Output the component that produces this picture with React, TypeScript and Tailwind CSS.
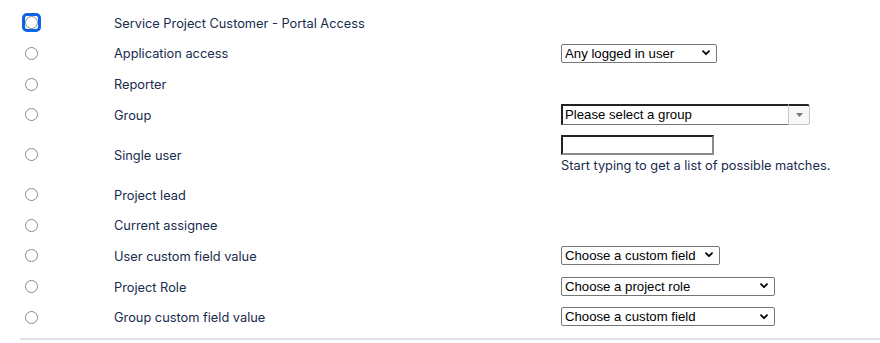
import React from 'react';

const Chevron = () => (
  <svg width="8" height="6" viewBox="0 0 8 6" className="absolute right-[7px] top-1/2 -translate-y-1/2 pointer-events-none">
    <path d="M1 1.2l3 3 3-3" fill="none" stroke="#000" strokeWidth="1.8" strokeLinecap="round" strokeLinejoin="round" />
  </svg>
);

const NativeSelect: React.FC<{ label: string; width: string }> = ({ label, width }) => (
  <div className={`relative h-[19px] ${width}`}>
    <div className="h-full w-full border border-[#767676] rounded-[2px] bg-white pl-[3px] text-[13.2px] leading-[17px] text-black font-['Liberation_Sans',Arial,sans-serif] whitespace-nowrap">
      {label}
    </div>
    <Chevron />
  </div>
);

const Radio: React.FC<{ focused?: boolean }> = ({ focused }) => (
  <span
    className={`flex items-center justify-center w-[19px] h-[19px] rounded-[5px] ${
      focused ? 'border-[3px] border-[#0b63e5]' : 'border-[3px] border-transparent'
    }`}
  >
    <span className="block w-[13px] h-[13px] shrink-0 rounded-full border border-[#8a8a8a] bg-white" />
  </span>
);

interface Row {
  label: string;
  control?: React.ReactNode;
  tall?: boolean;
}

const rows: Row[] = [
  { label: 'Service Project Customer - Portal Access' },
  { label: 'Application access', control: <NativeSelect label="Any logged in user" width="w-[156px]" /> },
  { label: 'Reporter' },
  {
    label: 'Group',
    control: (
      <div className="flex h-[21px] w-[249px]">
        <div className="flex-1 border-t-2 border-l-2 border-b border-[#222] border-b-[#767676] bg-white pl-[2px] text-[13.2px] leading-[17px] text-black font-['Liberation_Sans',Arial,sans-serif]">
          Please select a group
        </div>
        <div className="flex w-[22px] items-center justify-center border border-[#c6c6c6] rounded-r-[3px] bg-[#f7f7f7] border-t-[#222] border-t-2">
          <svg width="7" height="4" viewBox="0 0 7 4">
            <path d="M0 0h7L3.5 4z" fill="#777" />
          </svg>
        </div>
      </div>
    ),
  },
  {
    label: 'Single user',
    tall: true,
    control: (
      <div className="flex flex-col">
        <div className="h-[20px] w-[153px] border-t-2 border-l-2 border-[#222] border-r-2 border-b-2 border-r-[#8a8a8a] border-b-[#8a8a8a] bg-white" />
        <div className="mt-[3px] text-[12.8px] leading-[16px] text-[#172b4d]">Start typing to get a list of possible matches.</div>
      </div>
    ),
  },
  { label: 'Project lead' },
  { label: 'Current assignee' },
  { label: 'User custom field value', control: <NativeSelect label="Choose a custom field" width="w-[159px]" /> },
  { label: 'Project Role', control: <NativeSelect label="Choose a project role" width="w-[214px]" /> },
  { label: 'Group custom field value', control: <NativeSelect label="Choose a custom field" width="w-[214px]" /> },
];

export default function App() {
  return (
    <div className="w-[880px] h-[343px] overflow-hidden bg-white font-['Inter','Noto_Sans',sans-serif] text-[12.8px] text-[#172b4d]">
      <div className="pt-[7px]">
        {rows.map((row, i) => (
          <div key={row.label} className={`flex items-center ${row.tall ? 'h-[49px]' : 'h-[30.7px]'}`}>
            <div className="w-[114px] pl-[22px] pt-[1px] flex items-center">
              <Radio focused={i === 0} />
            </div>
            <div className="w-[447px] pt-[2px]">{row.label}</div>
            <div>{row.control}</div>
          </div>
        ))}
      </div>
      <div className="ml-[20px] mt-[6px] border-t-2 border-[#dfe1e6]" />
    </div>
  );
}
